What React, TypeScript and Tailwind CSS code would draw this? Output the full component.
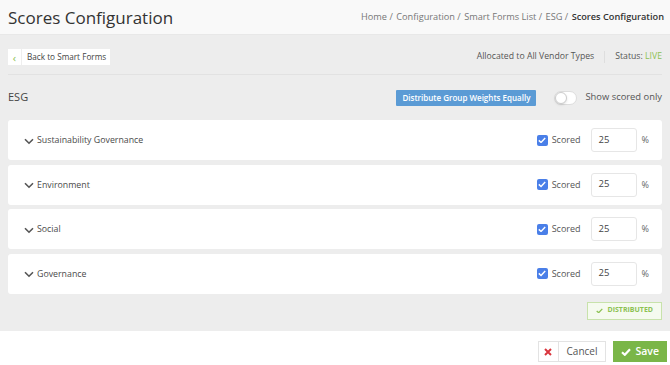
import React from "react";

const Chevron = () => (
  <svg width="10" height="7" viewBox="0 0 10 7" className="shrink-0">
    <path d="M1 1.2 L5 5.2 L9 1.2" fill="none" stroke="#555" strokeWidth="1.6" />
  </svg>
);

const Check = ({ color = "#fff", w = 10, sw = 2 }: { color?: string; w?: number; sw?: number }) => (
  <svg width={w} height={w * 0.8} viewBox="0 0 10 8">
    <path d="M1 4.2 L3.8 6.8 L9 1.2" fill="none" stroke={color} strokeWidth={sw} />
  </svg>
);

const groups = ["Sustainability Governance", "Environment", "Social", "Governance"];

export default function App() {
  return (
    <div className="w-[670px] h-[365px] bg-white text-[#555] overflow-hidden" style={{ fontFamily: '"Open Sans", sans-serif' }}>
      {/* header */}
      <div className="h-[35px] bg-[#f9f9f9] border-b border-[#e8e8e8] flex items-center justify-between pl-[8px] pr-[6px]">
        <div className="text-[17px] text-[#333] leading-none">Scores Configuration</div>
        <div className="text-[9.2px] text-[#777] flex items-center gap-[3.5px]">
          <span>Home /</span>
          <span>Configuration /</span>
          <span>Smart Forms List /</span>
          <span>ESG /</span>
          <span className="font-semibold text-[#333]">Scores Configuration</span>
        </div>
      </div>

      {/* body */}
      <div className="bg-[#ededed] h-[296px] px-[8px] pt-[14px]">
        <div className="flex items-center justify-between pb-[9px] border-b border-[#e2e2e2]">
          <div className="flex items-center bg-white h-[16px] text-[8.2px] text-[#444]">
            <span className="w-[14px] flex items-center justify-center text-[11px] leading-none text-[#8cc152] border-r border-[#eee] h-full">‹</span>
            <span className="pl-[5px] pr-[4px]">Back to Smart Forms</span>
          </div>
          <div className="flex items-center text-[8.7px] text-[#555] pr-[0px]">
            <span>Allocated to All Vendor Types</span>
            <span className="w-px h-[12px] bg-[#dedede] mx-[10px]" />
            <span>Status: <span className="text-[#8cc152]">LIVE</span></span>
          </div>
        </div>

        <div className="flex items-center justify-between h-[45px]">
          <div className="text-[11px] text-[#444]">ESG</div>
          <div className="flex items-center">
            <div className="bg-[#5b9bd5] text-white text-[8px] font-semibold h-[16px] px-[6px] flex items-center rounded-[1px]">Distribute Group Weights Equally</div>
            <div className="ml-[18px] w-[23px] h-[14px] rounded-full bg-white border border-[#ddd] flex items-center">
              <div className="w-[12px] h-[12px] rounded-full bg-white border border-[#ccc] shadow-sm" />
            </div>
            <span className="ml-[8px] text-[9.4px] text-[#555]">Show scored only</span>
          </div>
        </div>

        <div className="flex flex-col gap-[4.5px]">
          {groups.map((g) => (
            <div key={g} className="bg-white rounded-[3px] h-[40px] flex items-center justify-between pl-[16px] pr-[13px]">
              <div className="flex items-center gap-[3px] text-[8.8px] text-[#4a4a4a] mt-[2px]">
                <Chevron />
                <span>{g}</span>
              </div>
              <div className="flex items-center">
                <div className="w-[11px] h-[11px] rounded-[2px] bg-[#4a7fe8] flex items-center justify-center">
                  <Check w={8} sw={1.8} />
                </div>
                <span className="ml-[4px] text-[9px] text-[#555]">Scored</span>
                <div className="ml-[10px] w-[46px] h-[24px] border border-[#e6e6e6] rounded-[3px] flex items-center pl-[7px] text-[9.5px] text-[#444]">25</div>
                <span className="ml-[5px] text-[9px] text-[#666]">%</span>
              </div>
            </div>
          ))}
        </div>

        <div className="flex justify-end mt-[8px]">
          <div className="h-[18px] px-[8px] bg-[#f5faef] border border-[#c8e2ab] flex items-center gap-[5px] text-[7px] font-bold text-[#8cc152]">
            <Check color="#8cc152" w={7} sw={1.8} />
            <span>DISTRIBUTED</span>
          </div>
        </div>
      </div>

      {/* footer */}
      <div className="flex justify-end items-center pt-[10px] pr-[3px]">
        <div className="flex items-center h-[21px] border border-[#e3e3e3] bg-white">
          <div className="w-[20px] h-full flex items-center justify-center border-r border-[#e3e3e3]">
            <svg width="8" height="8" viewBox="0 0 8 8">
              <path d="M1 1 L7 7 M7 1 L1 7" stroke="#d9363e" strokeWidth="2" />
            </svg>
          </div>
          <span className="px-[8px] text-[10px] text-[#555]">Cancel</span>
        </div>
        <div className="ml-[7px] h-[21px] bg-[#7ab648] text-white flex items-center gap-[4px] px-[8px] text-[10.5px] font-semibold">
          <Check w={10} sw={2.2} />
          <span>Save</span>
        </div>
      </div>
    </div>
  );
}
